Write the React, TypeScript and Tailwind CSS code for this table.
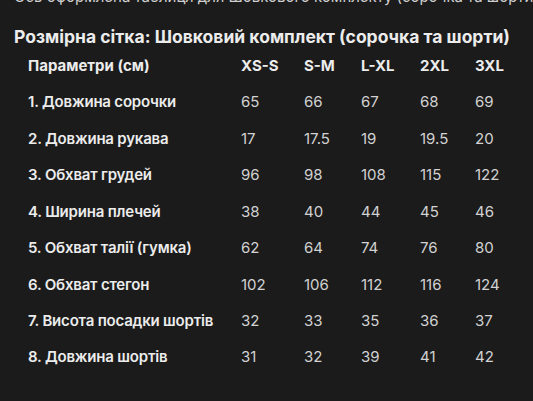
const sizes = ["XS-S", "S-M", "L-XL", "2XL", "3XL"];

const rows: [string, string[]][] = [
  ["1. Довжина сорочки", ["65", "66", "67", "68", "69"]],
  ["2. Довжина рукава", ["17", "17.5", "19", "19.5", "20"]],
  ["3. Обхват грудей", ["96", "98", "108", "115", "122"]],
  ["4. Ширина плечей", ["38", "40", "44", "45", "46"]],
  ["5. Обхват талії (гумка)", ["62", "64", "74", "76", "80"]],
  ["6. Обхват стегон", ["102", "106", "112", "116", "124"]],
  ["7. Висота посадки шортів", ["32", "33", "35", "36", "37"]],
  ["8. Довжина шортів", ["31", "32", "39", "41", "42"]],
];

const grid = "grid grid-cols-[213px_63px_57px_59px_55px_1fr] items-center h-[36.45px]";

export default function App() {
  return (
    <div className="h-[401px] w-[533px] overflow-hidden bg-[#1b1b1b] font-['Inter',sans-serif] text-[15px]">
      <p className="-mt-[15px] pl-[14px] whitespace-nowrap leading-6 text-[#cfcfcf]">
        Ось оформлена таблиця для Шовкового комплекту (сорочка та шорти), з урахуванням
      </p>
      <h2 className="mt-[16px] pl-[14px] whitespace-nowrap text-[17.5px] leading-6 font-bold text-[#ececec]">
        Розмірна сітка: Шовковий комплект (сорочка та шорти)
      </h2>
      <div className="-mt-[1px] pl-[28px]">
        <div className={`${grid} font-bold text-[#ececec]`}>
          <span>Параметри (см)</span>
          {sizes.map((s) => (
            <span key={s}>{s}</span>
          ))}
        </div>
        {rows.map(([label, vals]) => (
          <div key={label} className={grid}>
            <span className="font-semibold tracking-[-0.2px] text-[#ececec] whitespace-nowrap">{label}</span>
            {vals.map((v, i) => (
              <span key={i} className="text-[#d2d2d2]">
                {v}
              </span>
            ))}
          </div>
        ))}
      </div>
    </div>
  );
}
